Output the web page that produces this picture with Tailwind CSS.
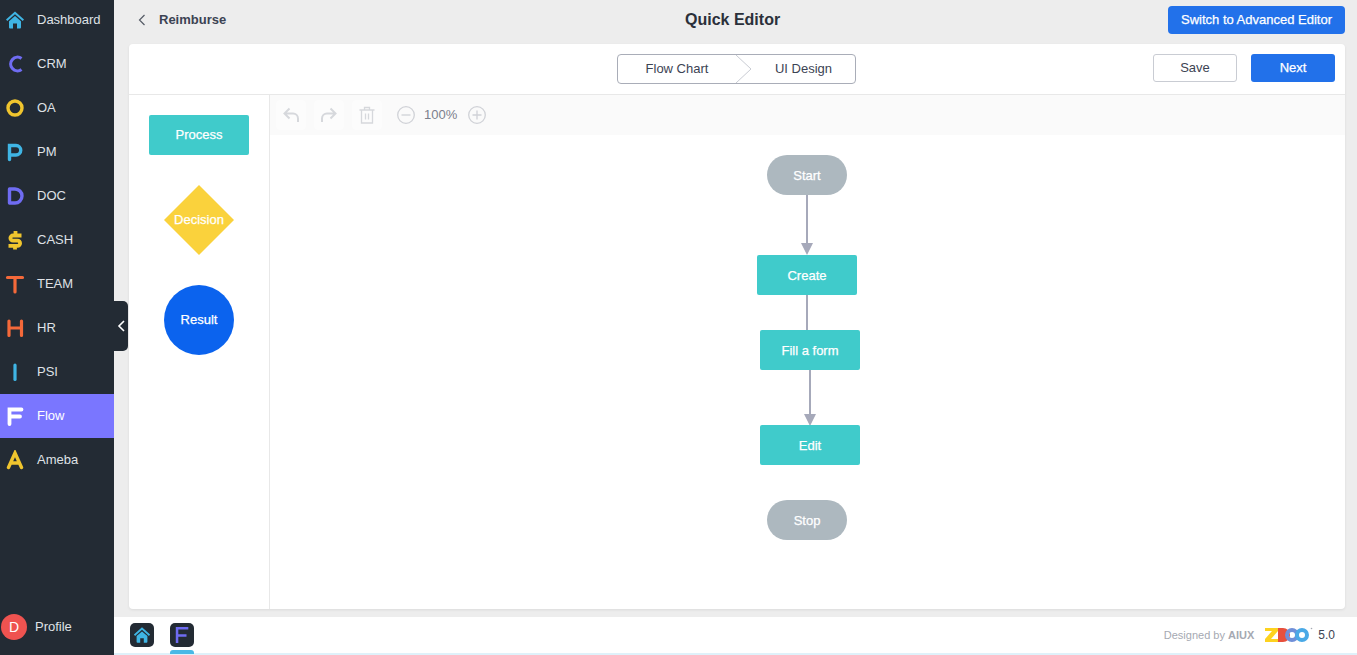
<!DOCTYPE html>
<html>
  <head>
    <title>Quick Editor</title>
    <script src="https://cdn.jsdelivr.net/npm/@tailwindcss/browser@4"></script>
  </head>
  <body class="h-[655px] w-[1357px] overflow-hidden bg-[#ededed] font-['Liberation_Sans',Arial,sans-serif] text-[13px] text-[#3c4353]">
    <div class="flex h-[655px]">
      <!-- Sidebar -->
      <aside class="relative flex w-[114px] shrink-0 flex-col bg-[#232b34] text-[#dfe1e6]">
        <nav class="-mt-[2px] flex flex-col">
          <a class="flex h-[44px] items-center pl-[5px]">
            <svg class="h-[20px] w-[20px]" viewBox="0 0 20 20"><path fill="#3fb5e4" d="M10 1.500 1 9.500 2.300 11 10 4.300 17.700 11 19 9.500ZM4 11.200 10 6l6 5.200V17.500a1 1 0 0 1-1 1H12V13.500H8V18.500H5a1 1 0 0 1-1-1Z"/></svg>
            <span class="pl-[12px]">Dashboard</span>
          </a>
          <a class="flex h-[44px] items-center pl-[5px]">
            <svg class="h-[20px] w-[20px]" viewBox="0 0 20 20"><path fill="none" stroke="#6f6cf2" stroke-width="3.200" d="M16.500 4.500A6.800 6.800 0 1 0 16.500 15.500"/></svg>
            <span class="pl-[12px]">CRM</span>
          </a>
          <a class="flex h-[44px] items-center pl-[5px]">
            <svg class="h-[20px] w-[20px]" viewBox="0 0 20 20"><circle cx="10" cy="10" r="7" fill="none" stroke="#f0c52e" stroke-width="3.400"/></svg>
            <span class="pl-[12px]">OA</span>
          </a>
          <a class="flex h-[44px] items-center pl-[6px]">
            <svg class="h-[20px] w-[20px]" viewBox="0 0 20 20"><path fill="none" stroke="#3fb5e4" stroke-width="3.400" stroke-linecap="round" d="M3.500 17.500V3.500H10a4.500 4.500 0 0 1 0 9.500H3.500"/></svg>
            <span class="pl-[11px]">PM</span>
          </a>
          <a class="flex h-[44px] items-center pl-[6px]">
            <svg class="h-[20px] w-[20px]" viewBox="0 0 20 20"><path fill="none" stroke="#6f6cf2" stroke-width="3.400" stroke-linejoin="round" d="M3.500 3H9a7 7 0 0 1 0 14H3.500Z"/></svg>
            <span class="pl-[11px]">DOC</span>
          </a>
          <a class="flex h-[44px] items-center pl-[5px]">
            <svg class="h-[20px] w-[20px]" viewBox="0 0 20 20"><path fill="none" stroke="#f0c52e" stroke-width="3.800" d="M16.500 5.500H8a2.600 2.600 0 0 0 0 5.200H12.500a2.600 2.600 0 0 1 0 5.200H3.500M10.500 1V5M10 16V19.500"/></svg>
            <span class="pl-[12px]">CASH</span>
          </a>
          <a class="flex h-[44px] items-center pl-[5px]">
            <svg class="h-[20px] w-[20px]" viewBox="0 0 20 20"><path fill="none" stroke="#f4693a" stroke-width="3.200" stroke-linecap="round" d="M2.500 3.500H17.500M10 3.500V18"/></svg>
            <span class="pl-[12px]">TEAM</span>
          </a>
          <a class="flex h-[44px] items-center pl-[5px]">
            <svg class="h-[20px] w-[20px]" viewBox="0 0 20 20"><path fill="none" stroke="#f4693a" stroke-width="3.200" stroke-linecap="round" d="M4 3V17.500M16.500 3V17.500M4 10H16.500"/></svg>
            <span class="pl-[12px]">HR</span>
          </a>
          <a class="flex h-[44px] items-center pl-[5px]">
            <svg class="h-[20px] w-[20px]" viewBox="0 0 20 20"><path fill="none" stroke="#3fb5e4" stroke-width="3.200" stroke-linecap="round" d="M10 3V17.500"/></svg>
            <span class="pl-[12px]">PSI</span>
          </a>
          <a class="flex h-[44px] items-center bg-[#7a76ff] pl-[6px] text-white">
            <svg class="h-[20px] w-[20px]" viewBox="0 0 20 20"><path fill="none" stroke="#fff" stroke-width="3.800" stroke-linecap="round" d="M3.500 18V3.500H15.500M3.500 10.500H14"/></svg>
            <span class="pl-[11px]">Flow</span>
          </a>
          <a class="flex h-[44px] items-center pl-[5px]">
            <svg class="h-[20px] w-[20px]" viewBox="0 0 20 20"><path fill="none" stroke="#f0c52e" stroke-width="3.400" stroke-linecap="round" d="M3.500 17.500 10 3 16.500 17.500M6 13H14"/></svg>
            <span class="pl-[12px]">Ameba</span>
          </a>
        </nav>
        <div class="mt-auto mb-[15px] flex items-center gap-[8px] pl-[1px]">
          <span class="flex h-[26px] w-[26px] items-center justify-center rounded-full bg-[#ef5350] text-[14px] text-white">D</span>
          <span>Profile</span>
        </div>
        <!-- Collapse handle -->
        <button class="absolute top-[301px] left-[114px] z-10 flex h-[50px] w-[14px] items-center justify-center rounded-r-[5px] bg-[#232b34]">
          <svg class="h-[14px] w-[10px]" viewBox="0 0 10 14"><path fill="none" stroke="#fff" stroke-width="1.600" d="M8 2 3 7l5 5"/></svg>
        </button>
      </aside>

      <!-- Main -->
      <main class="flex min-w-0 flex-1 flex-col">
        <header class="relative flex h-[44px] items-start justify-between pt-[6px] pr-[12px] pl-[24px]">
          <div class="flex h-[28px] items-center">
            <svg class="h-[12px] w-[8px]" viewBox="0 0 8 12"><path fill="none" stroke="#555b66" stroke-width="1.200" d="M6.500 1 1.500 6l5 5"/></svg>
            <span class="pl-[13px] font-bold text-[#3c4353]">Reimburse</span>
          </div>
          <h1 class="absolute top-[9px] left-[571px] text-[16px] leading-[21px] font-bold text-[#2b303a]">Quick Editor</h1>
          <button class="h-[28px] w-[177px] rounded-[4px] bg-[#2271ea] text-[13px] text-white [-webkit-text-stroke:0.25px_white]">Switch to Advanced Editor</button>
        </header>

        <section class="mr-[12px] ml-[15px] flex h-[565px] flex-col rounded-[4px] bg-white shadow-[0_1px_3px_rgba(0,0,0,0.08)]">
          <div class="relative flex h-[51px] shrink-0 items-center justify-end gap-[14px] border-b border-[#e8e8e8] pr-[10px] pb-[2px]">
            <div class="absolute top-[10px] left-[488px] flex h-[30px] w-[239px] rounded-[4px] border border-[#a9adb8] text-[#3c4353]">
              <span class="flex w-[118px] items-center justify-center">Flow Chart</span>
              <svg class="h-[28px] w-[16px] shrink-0" viewBox="0 0 16 28"><path fill="none" stroke="#c9ccd3" d="M0 0 15 14 0 28"/></svg>
              <span class="flex flex-1 items-center justify-center">UI Design</span>
            </div>
            <button class="h-[28px] w-[84px] rounded-[3px] border border-[#c9ccd3] pb-[1px] text-[#3c4353]">Save</button>
            <button class="h-[28px] w-[84px] rounded-[3px] bg-[#2271ea] pb-[1px] text-white [-webkit-text-stroke:0.25px_white]">Next</button>
          </div>

          <div class="flex min-h-0 flex-1">
            <!-- Shape palette -->
            <div class="flex w-[141px] shrink-0 flex-col items-center border-r border-[#e8e8e8] pt-[20px] text-white [-webkit-text-stroke:0.25px_white]">
              <div class="flex h-[40px] w-[100px] items-center justify-center rounded-[2px] bg-[#40cbcb]">Process</div>
              <div class="relative mt-[30px] flex h-[70px] w-[70px] items-center justify-center">
                <svg class="absolute inset-0" viewBox="0 0 70 70"><path fill="#fad23c" d="M35 0 70 35 35 70 0 35Z"/></svg>
                <span class="relative">Decision</span>
              </div>
              <div class="mt-[30px] flex h-[70px] w-[70px] items-center justify-center rounded-full bg-[#0b63ee]">Result</div>
            </div>

            <div class="flex min-w-0 flex-1 flex-col">
              <!-- Toolbar -->
              <div class="flex h-[40px] shrink-0 items-center bg-[#fafafa] pl-[6px] text-[#7b808c]">
                <span class="flex h-[30px] w-[30px] items-center justify-center rounded-[4px] bg-white/40">
                  <svg class="h-[20px] w-[20px]" viewBox="0 0 20 20"><path fill="none" stroke="#d6d8dc" stroke-width="2" d="M8.500 3.500 3.500 8.500l5 5M3.500 8.500H12a5 5 0 0 1 5 5V17"/></svg>
                </span>
                <span class="ml-[8px] flex h-[30px] w-[30px] items-center justify-center rounded-[4px] bg-white/40">
                  <svg class="h-[20px] w-[20px]" viewBox="0 0 20 20"><path fill="none" stroke="#d6d8dc" stroke-width="2" d="M11.500 3.500 16.500 8.500l-5 5M16.500 8.500H8a5 5 0 0 0-5 5V17"/></svg>
                </span>
                <span class="ml-[8px] flex h-[30px] w-[30px] items-center justify-center rounded-[4px] bg-white/40">
                  <svg class="h-[20px] w-[20px]" viewBox="0 0 20 20"><path fill="none" stroke="#d6d8dc" stroke-width="1.300" d="M2.500 5h15M7.500 5V2.500h5V5M4.500 5v13h11V5M8.500 8.500v6M11.500 8.500v6"/></svg>
                </span>
                <svg class="ml-[14px] h-[20px] w-[20px]" viewBox="0 0 20 20"><circle cx="10" cy="10" r="8.300" fill="none" stroke="#d0d2d7" stroke-width="1.300"/><path stroke="#d0d2d7" stroke-width="1.300" d="M5.500 10h9"/></svg>
                <span class="ml-[8px] w-[34px] text-[13px]">100%</span>
                <svg class="ml-[9px] h-[20px] w-[20px]" viewBox="0 0 20 20"><circle cx="10" cy="10" r="8.300" fill="none" stroke="#d0d2d7" stroke-width="1.300"/><path stroke="#d0d2d7" stroke-width="1.300" d="M5.500 10h9M10 5.500v9"/></svg>
              </div>

              <!-- Canvas: x/y are the picture's diagram coordinates -->
              <div class="relative flex-1 text-white [-webkit-text-stroke:0.25px_white]">
                <svg class="absolute inset-0 h-full w-full">
                  <path fill="none" stroke="#a6a9ba" stroke-width="2" d="M537 60V112M537 160V195M540 235V282"/>
                  <path fill="#a6a9ba" d="M531 108H543L537 120ZM534 279H546L540 291Z"/>
                </svg>
                <div class="absolute top-[20px] left-[497px] flex h-[40px] w-[80px] items-center justify-center rounded-[20px] bg-[#adb8bf] pt-[1px]">Start</div>
                <div class="absolute top-[120px] left-[487px] flex h-[40px] w-[100px] items-center justify-center rounded-[2px] bg-[#40cbcb] pt-[1px]">Create</div>
                <div class="absolute top-[195px] left-[490px] flex h-[40px] w-[100px] items-center justify-center rounded-[2px] bg-[#40cbcb] pt-[1px]">Fill a form</div>
                <div class="absolute top-[290px] left-[490px] flex h-[40px] w-[100px] items-center justify-center rounded-[2px] bg-[#40cbcb] pt-[1px]">Edit</div>
                <div class="absolute top-[365px] left-[497px] flex h-[40px] w-[80px] items-center justify-center rounded-[20px] bg-[#adb8bf] pt-[1px]">Stop</div>
              </div>
            </div>
          </div>
        </section>

        <!-- Footer -->
        <footer class="relative mt-[8px] flex h-[38px] items-center justify-between border-b-2 border-[#dff1fa] bg-white pr-[22px] pl-[16px]">
          <div class="flex gap-[16px]">
            <span class="flex h-[24px] w-[24px] items-center justify-center rounded-[5px] bg-[#232b34]">
              <svg class="h-[18px] w-[18px]" viewBox="0 0 20 20"><path fill="#3fb5e4" d="M10 1.500 1 9.500 2.300 11 10 4.300 17.700 11 19 9.500ZM4 11.200 10 6l6 5.200V17.500a1 1 0 0 1-1 1H12V13.500H8V18.500H5a1 1 0 0 1-1-1Z"/></svg>
            </span>
            <span class="relative flex h-[24px] w-[24px] items-center justify-center rounded-[5px] bg-[#232b34]">
              <svg class="h-[18px] w-[18px]" viewBox="0 0 20 20"><path fill="none" stroke="#6f6cf2" stroke-width="2.800" d="M4.500 19V2.500H17M4.500 10.500H15"/></svg>
              <span class="absolute top-[27px] left-0 h-[4px] w-[24px] rounded-t-[3px] bg-[#49b9e6]"></span>
            </span>
          </div>
          <div class="flex items-center text-[11px] text-[#a5a9b2]">
            <span>Designed by <b class="font-bold">AIUX</b></span>
            <svg class="ml-[11px] h-[16px] w-[48px]" viewBox="0 0 48 16">
              <path fill="#fdd21f" d="M0 1H13V4L6 12H13V15H0V12L7 4H0Z"/>
              <path fill="#e7503c" d="M13 1H18A7 7 0 0 1 18 15H13Z"/>
              <circle cx="27" cy="8" r="5" fill="none" stroke="#6f8fd8" stroke-width="4"/>
              <circle cx="37" cy="8" r="5" fill="none" stroke="#4aa9e6" stroke-width="4"/>
              <circle cx="46.500" cy="1.500" r="0.800" fill="#a5a9b2"/>
            </svg>
            <span class="ml-[5px] text-[12px] text-[#3c4353]">5.0</span>
          </div>
        </footer>
      </main>
    </div>
  </body>
</html>
